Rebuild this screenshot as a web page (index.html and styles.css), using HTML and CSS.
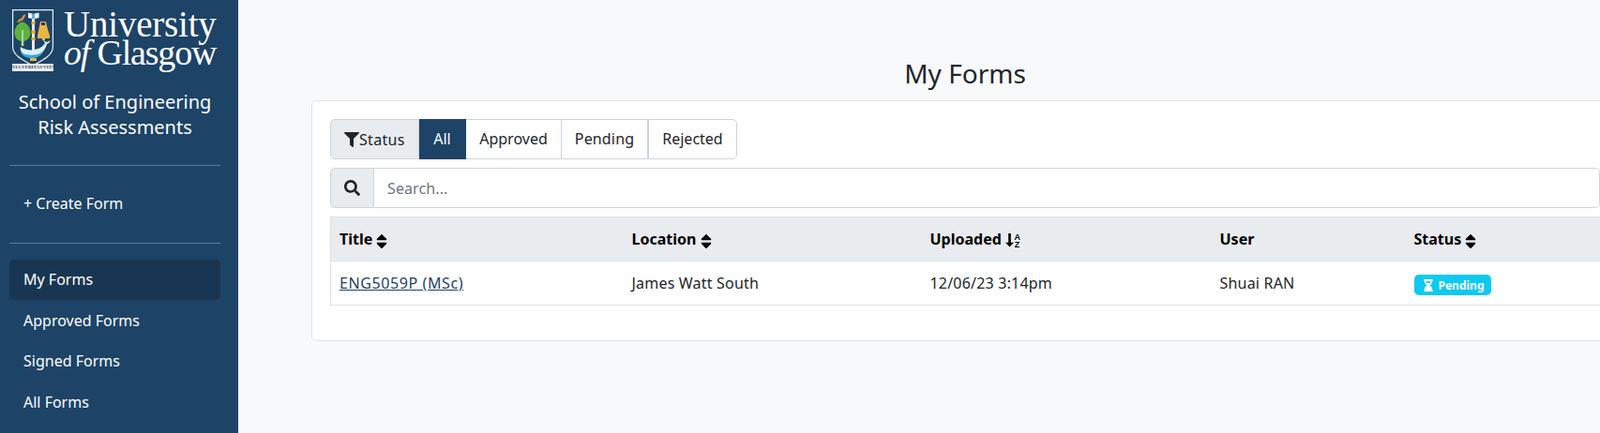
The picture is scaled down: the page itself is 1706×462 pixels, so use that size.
FILE: index.html
```html
<!DOCTYPE html>
<html lang="en">
<head>
<meta charset="utf-8">
<title>My Forms</title>
<link rel="stylesheet" href="styles.css">
</head>
<body>
<div class="app">
  <aside class="sidebar">
    <div class="logo">
      <svg class="crest" viewBox="0 0 44 66" aria-hidden="true">
        <path d="M.6.6H43.400V40C43.400 49 33 54 22 60C11 54 .6 49 .6 40Z" fill="#1d4367" stroke="#e8eef3" stroke-width="1.200"/>
        <path d="M17 3.500l4.500 1V10L17 9zM28.500 3.500l-4.500 1V10L28.500 9z" fill="#f2f6fa"/>
        <path d="M21.500 4.500h2.500V10h-2.500z" fill="#6fa8d8"/>
        <path d="M21 10h3v42h-3z" fill="#e4e8ec"/>
        <path d="M20.500 13h4v3h-4zM20.500 22h4v4h-4zM20.500 30h4v3h-4zM19 52h7v3h-7z" fill="#e9b23c"/>
        <path d="M4.500 14l2.500-3 3-2 2-3 2.500-1-1 3-2 3.500-4 2z" fill="#e0902f"/>
        <path d="M11 13.500c5 1 8.500 6 8.500 11.500s-3.500 8-7 9v5h-3v-5c-3.500-1-7-3.500-7-9S6 14.500 11 13.500z" fill="#5cb13f"/>
        <path d="M10.300 22h1.400v17h-1.400z" fill="#d7e5c8"/>
        <path d="M30 13h6l1 5 3 10v3H27v-3l2-10z" fill="#eab53f"/>
        <path d="M31 14h4v3h-4z" fill="#1d4367"/>
        <path d="M32 31h3v2h-3z" fill="#eab53f"/>
        <path d="M9 40c4 3 10 4 14 3 7-1 10-4 12-7l-2-3 4 2 4-2-2 3-2 1c-2 8-9 14-17 13-6 0-13-4-11-10z" fill="#d9f0f8"/>
        <path d="M9 46c7 4 19 4 25-2-3 6-8 8-13 8-5 0-10-2-12-6z" fill="#35a7dc"/>
      </svg>
      <div class="crest-ribbon">VIA VERITAS VITA</div>
      <div class="wordmark">
        <div class="word-top">University</div>
        <div class="word-bottom"><i>of</i> Glasgow</div>
      </div>
    </div>
    <h2 class="school">School of Engineering<br>Risk Assessments</h2>
    <hr class="rule">
    <nav class="nav nav-create"><a class="nav-item" href="#">+ Create Form</a></nav>
    <hr class="rule">
    <nav class="nav">
      <a class="nav-item active" href="#">My Forms</a>
      <a class="nav-item" href="#">Approved Forms</a>
      <a class="nav-item" href="#">Signed Forms</a>
      <a class="nav-item" href="#">All Forms</a>
    </nav>
  </aside>
  <main class="main">
    <h1 class="title">My Forms</h1>
    <section class="card">
      <div class="filters">
        <div class="filter-label">
          <svg class="ico-filter" viewBox="0 0 512 512"><path d="M487.976 0H24.028C2.71 0-8.047 25.866 7.058 40.971L192 225.941V432c0 7.831 3.821 15.17 10.237 19.662l80 55.98C298.02 518.69 320 507.493 320 487.98V225.941l184.947-184.97C520.021 25.896 509.338 0 487.976 0z"/></svg>Status
        </div>
        <button class="filter active w-all">All</button>
        <button class="filter w-approved">Approved</button>
        <button class="filter w-pending">Pending</button>
        <button class="filter w-rejected">Rejected</button>
      </div>
      <div class="search">
        <div class="search-addon">
          <svg class="ico-search" viewBox="0 0 512 512"><path d="M505 442.700L405.300 343c-4.500-4.500-10.600-7-17-7H372c27.600-35.300 44-79.700 44-128C416 93.100 322.900 0 208 0S0 93.100 0 208s93.100 208 208 208c48.300 0 92.700-16.400 128-44v16.300c0 6.400 2.500 12.500 7 17l99.700 99.700c9.400 9.400 24.600 9.400 33.900 0l28.300-28.300c9.400-9.400 9.400-24.600.1-34zM208 336c-70.700 0-128-57.200-128-128 0-70.700 57.200-128 128-128 70.700 0 128 57.200 128 128 0 70.700-57.200 128-128 128z"/></svg>
        </div>
        <input class="search-input" type="text" placeholder="Search...">
      </div>
      <table class="table">
        <colgroup>
          <col class="c1"><col class="c2"><col class="c3"><col class="c4"><col class="c5">
        </colgroup>
        <thead>
          <tr>
            <th>Title <svg class="ico-sort" viewBox="0 0 320 512"><path d="M41 288h238c21.400 0 32.100 25.900 17 41L177 448c-9.400 9.400-24.600 9.400-33.900 0L24 329c-15.100-15.100-4.400-41 17-41zm255-105L177 64c-9.400-9.400-24.600-9.400-33.900 0L24 183c-15.100 15.100-4.400 41 17 41h238c21.400 0 32.100-25.900 17-41z"/></svg></th>
            <th>Location <svg class="ico-sort" viewBox="0 0 320 512"><path d="M41 288h238c21.400 0 32.100 25.900 17 41L177 448c-9.400 9.400-24.600 9.400-33.900 0L24 329c-15.100-15.100-4.400-41 17-41zm255-105L177 64c-9.400-9.400-24.600-9.400-33.900 0L24 183c-15.100 15.100-4.400 41 17 41h238c21.400 0 32.100-25.900 17-41z"/></svg></th>
            <th>Uploaded <svg class="ico-alpha" viewBox="0 0 17 16"><path d="M3.200 1h2.600v9.700H9L4.500 15.500 0 10.700h3.200z"/><text class="alpha-text" x="9.500" y="7.500">A</text><text class="alpha-text" x="9.800" y="15.500">Z</text></svg></th>
            <th>User</th>
            <th>Status <svg class="ico-sort" viewBox="0 0 320 512"><path d="M41 288h238c21.400 0 32.100 25.900 17 41L177 448c-9.400 9.400-24.600 9.400-33.900 0L24 329c-15.100-15.100-4.400-41 17-41zm255-105L177 64c-9.400-9.400-24.600-9.400-33.900 0L24 183c-15.100 15.100-4.400 41 17 41h238c21.400 0 32.100-25.900 17-41z"/></svg></th>
          </tr>
        </thead>
        <tbody>
          <tr>
            <td><a class="form-link" href="#">ENG5059P (MSc)</a></td>
            <td class="spaced">James Watt South</td>
            <td class="spaced">12/06/23 3:14pm</td>
            <td class="spaced">Shuai RAN</td>
            <td class="badge-cell"><span class="badge"><svg class="ico-hour" viewBox="0 0 384 512"><path d="M360 64c13.255 0 24-10.745 24-24V24c0-13.255-10.745-24-24-24H24C10.745 0 0 10.745 0 24v16c0 13.255 10.745 24 24 24 0 90.965 51.016 167.734 120.842 192C75.016 280.266 24 357.035 24 448c-13.255 0-24 10.745-24 24v16c0 13.255 10.745 24 24 24h336c13.255 0 24-10.745 24-24v-16c0-13.255-10.745-24-24-24 0-90.965-51.016-167.734-120.842-192C308.984 231.734 360 154.965 360 64z"/><path class="hour-gap" d="M85 85h214c-6 30-18 55-36 75H121c-18-20-30-45-36-75z"/></svg>Pending</span></td>
          </tr>
        </tbody>
      </table>
    </section>
  </main>
</div>
</body>
</html>
```
FILE: styles.css
```css
* { box-sizing: border-box; }
html, body { margin: 0; height: 100%; overflow: hidden; }
body {
  background: #f8f9fa;
  color: #212529;
  font-family: "Noto Sans", "Open Sans", sans-serif;
  font-size: 16px;
}
.app { display: flex; width: 1726px; height: 462px; }

/* Sidebar */
.sidebar {
  flex: 0 0 254px;
  height: 462px;
  background: #1d4367;
  padding: 0 19px 0 10px;
  color: #fff;
  overflow: hidden;
}
.logo { position: relative; display: flex; padding: 10px 0 0 3px; height: 95px; }
.crest { width: 44px; height: 66px; flex: none; }
.crest-ribbon {
  position: absolute;
  left: 3px;
  top: 68px;
  width: 44px;
  height: 8px;
  background: #e8eef3;
  color: #1d4367;
  font: 700 5px/8px "Liberation Serif", serif;
  text-align: center;
  white-space: nowrap;
  overflow: hidden;
}
.wordmark {
  margin-left: 11px;
  font-family: "Liberation Serif", serif;
  color: #fff;
  white-space: nowrap;
}
.word-top { font-size: 39px; line-height: 30px; margin-top: 1px; letter-spacing: -.2px; }
.word-bottom { font-size: 38px; line-height: 30px; letter-spacing: -1.200px; }
.school {
  margin: 0;
  font-size: 20px;
  font-weight: 400;
  line-height: 27px;
  text-align: center;
  height: 81px;
  white-space: nowrap;
}
.rule { margin: 0; border: 0; border-top: 1px solid rgba(255,255,255,.3); }
.nav { display: flex; flex-direction: column; padding-top: 17px; }
.nav-create { padding: 18.500px 0 19.500px; }
.nav-item {
  display: flex;
  align-items: center;
  height: 43.500px;
  padding: 0 15px;
  color: #fff;
  text-decoration: none;
  border-radius: 5px;
  white-space: nowrap;
}
.nav-item.active { background: #183651; }

/* Main */
.main { flex: 1; padding: 61px 0 0 78px; min-width: 0; }
.title {
  margin: 0 0 12px;
  font-size: 28px;
  font-weight: 400;
  line-height: 34px;
  text-align: center;
}
.card {
  height: 257px;
  background: #fff;
  border: 1px solid #dfe2e5;
  border-radius: 5px;
  padding: 19px;
}

/* Filter group */
.filters { display: inline-flex; height: 43px; margin-bottom: 9px; vertical-align: top; }
.filter-label {
  display: flex;
  align-items: center;
  width: 95px;
  padding-left: 14px;
  background: #e9ecef;
  border: 1px solid #ced4da;
  border-radius: 5px 0 0 5px;
  letter-spacing: .3px;
}
.ico-filter { width: 16px; height: 16px; fill: #212529; flex: none; }
.filter {
  height: 43px;
  padding: 0 0 2px;
  background: #fff;
  border: 1px solid #ced4da;
  border-left-width: 0;
  color: #212529;
  font: inherit;
}
.filter.active { background: #1d4367; border-color: #1d4367; color: #fff; }
.w-all { width: 50px; }
.w-approved { width: 102px; }
.w-pending { width: 92px; letter-spacing: .15px; }
.w-rejected { width: 95px; border-left: 1px solid #ced4da; border-radius: 0 5px 5px 0; }

/* Search */
.search { display: flex; height: 43px; width: 1354px; margin-bottom: 9px; }
.search-addon {
  display: flex;
  align-items: center;
  justify-content: center;
  width: 47px;
  background: #e9ecef;
  border: 1px solid #ced4da;
  border-radius: 5px 0 0 5px;
}
.ico-search { width: 17px; height: 17px; fill: #212529; }
.search-input {
  flex: 1;
  min-width: 0;
  padding: 0 14px;
  border: 1px solid #ced4da;
  border-left: 0;
  border-radius: 0 5px 5px 0;
  background: #fff;
  color: #212529;
  font: inherit;
  letter-spacing: .1px;
  outline: 0;
}
.search-input::placeholder { color: #6c757d; opacity: 1; }

/* Table */
.table {
  width: 1354px;
  table-layout: fixed;
  border-collapse: collapse;
  border: 1px solid #dee2e6;
}
.c1 { width: 311px; }
.c2 { width: 318px; }
.c3 { width: 309px; }
.c4 { width: 207px; }
.c5 { width: 209px; }
th, td {
  height: 47px;
  padding: 0 10px;
  text-align: left;
  vertical-align: middle;
  white-space: nowrap;
}
th:first-child, td:first-child { padding-left: 9px; }
th { background: #e9ecef; font-weight: 700; color: #000; border-bottom: 1px solid #dee2e6; }
.ico-sort { width: 12px; height: 19px; vertical-align: -4px; margin: -2px 0; fill: #000; }
.ico-alpha { width: 17px; height: 16px; vertical-align: -3px; fill: #000; }
.alpha-text { font: 700 9px "Liberation Sans", sans-serif; }
.spaced { letter-spacing: .2px; }
.form-link { color: #1d4367; text-decoration: underline; letter-spacing: .6px; }
.badge-cell { padding-top: 4px; }
.badge {
  display: inline-flex;
  align-items: center;
  height: 22px;
  width: 82px;
  padding-left: 10px;
  border-radius: 5px;
  background: #0dcaf0;
  color: #fff;
  font-size: 12px;
  font-weight: 700;
  margin-top: 1px;
}
.ico-hour { width: 10px; height: 13px; fill: #fff; margin-right: 6px; flex: none; }
.hour-gap { fill: #0dcaf0; }
```
